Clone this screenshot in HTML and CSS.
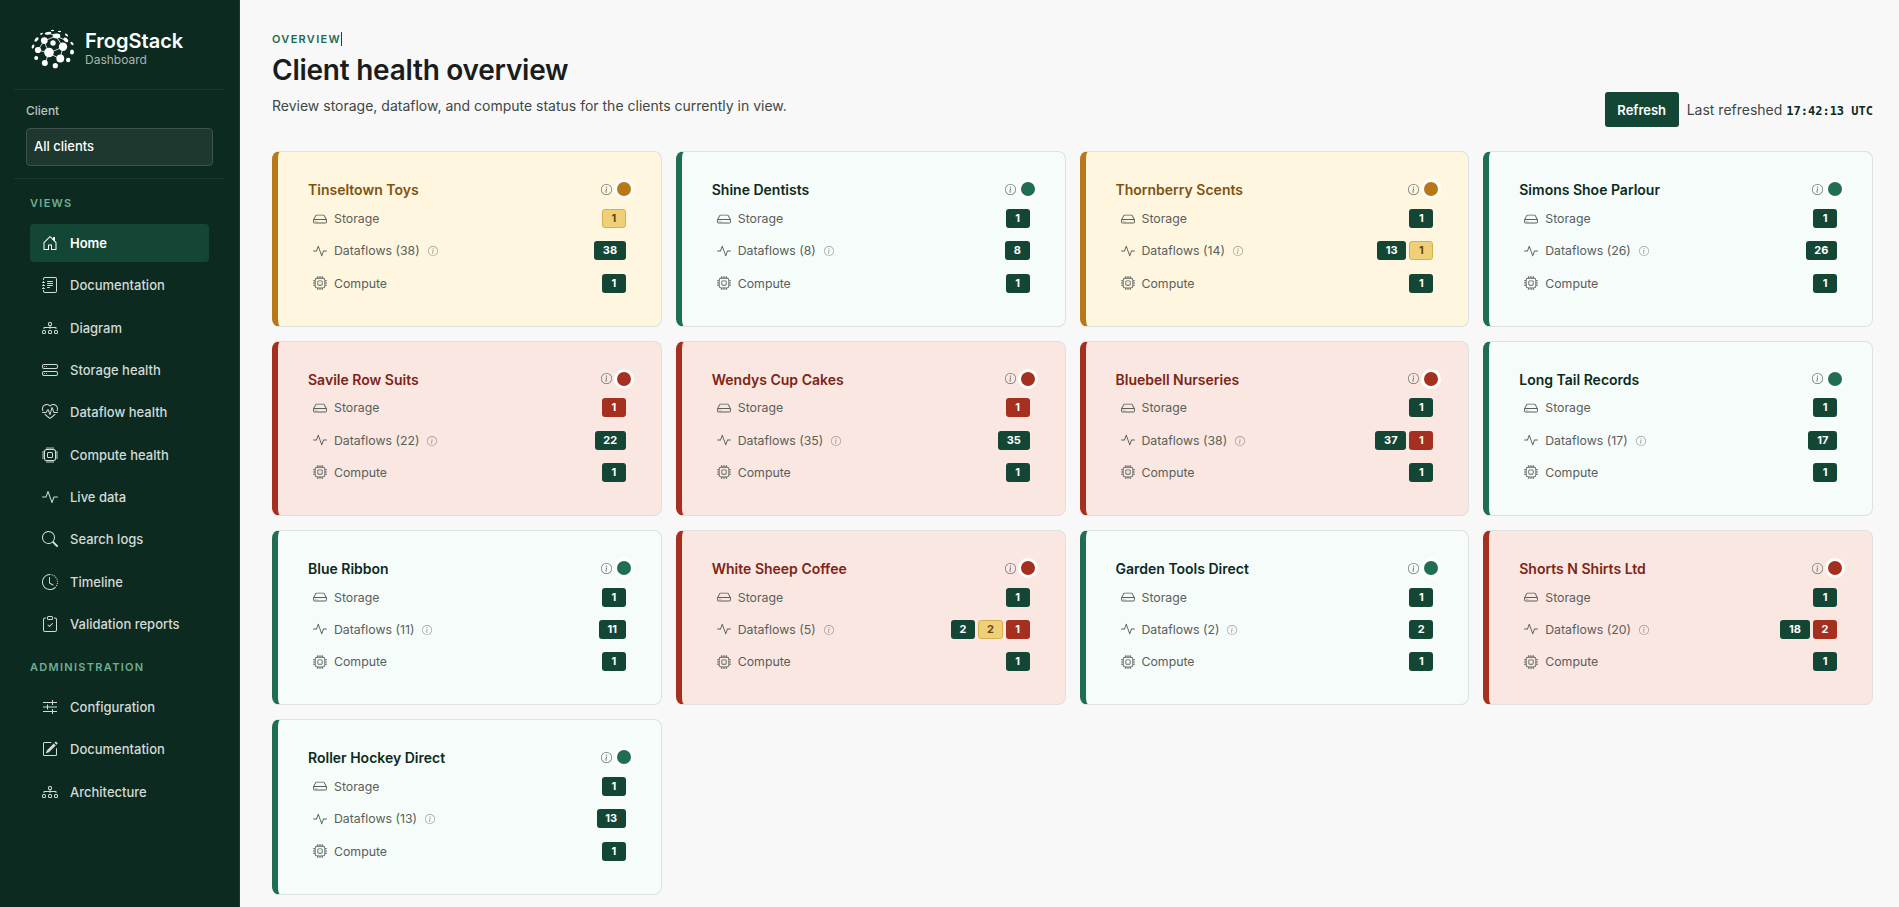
FILE: index.html
```
<!DOCTYPE html>
<html lang="en">
<head>
    <meta charset="UTF-8">
    <title>FrogStack Dashboard</title>
    <link rel="stylesheet" href="styles.css">
</head>
<body>
    <!-- Icon sprite -->
    <svg class="sprite" xmlns="http://www.w3.org/2000/svg">
        <symbol id="house" viewBox="0 0 16 16"><path d="M8.354 1.146a.5.5 0 0 0-.708 0l-6 6A.5.5 0 0 0 1.500 7.500v7a.5.5 0 0 0 .5.5h4.500a.5.5 0 0 0 .5-.5v-4h2v4a.5.5 0 0 0 .5.5H14a.5.5 0 0 0 .5-.5v-7a.5.5 0 0 0-.146-.354L13 5.793V2.500a.5.5 0 0 0-.5-.5h-1a.5.5 0 0 0-.5.5v1.293zM2.500 14V7.707l5.500-5.500 5.500 5.500V14H10v-4a.5.5 0 0 0-.5-.5h-3a.5.5 0 0 0-.5.5v4z"/></symbol>
        <symbol id="journal" viewBox="0 0 16 16"><path d="M5 10.500a.5.5 0 0 1 .5-.5h2a.5.5 0 0 1 0 1h-2a.5.5 0 0 1-.5-.5m0-2a.5.5 0 0 1 .5-.5h5a.5.5 0 0 1 0 1h-5a.5.5 0 0 1-.5-.5m0-2a.5.5 0 0 1 .5-.5h5a.5.5 0 0 1 0 1h-5a.5.5 0 0 1-.5-.5m0-2a.5.5 0 0 1 .5-.5h5a.5.5 0 0 1 0 1h-5a.5.5 0 0 1-.5-.5"/><path d="M3 0h10a2 2 0 0 1 2 2v12a2 2 0 0 1-2 2H3a2 2 0 0 1-2-2v-1h1v1a1 1 0 0 0 1 1h10a1 1 0 0 0 1-1V2a1 1 0 0 0-1-1H3a1 1 0 0 0-1 1v1H1V2a2 2 0 0 1 2-2"/><path d="M1 5v-.5a.5.5 0 0 1 1 0V5h.5a.5.5 0 0 1 0 1h-2a.5.5 0 0 1 0-1zm0 3v-.5a.5.5 0 0 1 1 0V8h.5a.5.5 0 0 1 0 1h-2a.5.5 0 0 1 0-1zm0 3v-.5a.5.5 0 0 1 1 0v.5h.5a.5.5 0 0 1 0 1h-2a.5.5 0 0 1 0-1z"/></symbol>
        <symbol id="diagram" viewBox="0 0 16 16"><path fill-rule="evenodd" d="M6 3.500A1.500 1.500 0 0 1 7.500 2h1A1.500 1.500 0 0 1 10 3.500v1A1.500 1.500 0 0 1 8.500 6v1H14a.5.5 0 0 1 .5.5v1a.5.5 0 0 1-1 0V8h-5v.5a.5.5 0 0 1-1 0V8h-5v.5a.5.5 0 0 1-1 0v-1A.5.5 0 0 1 2 7h5.500V6A1.500 1.500 0 0 1 6 4.500zM8.500 5a.5.5 0 0 0 .5-.5v-1a.5.5 0 0 0-.5-.5h-1a.5.5 0 0 0-.5.5v1a.5.5 0 0 0 .5.5zM0 11.500A1.500 1.500 0 0 1 1.500 10h1A1.500 1.500 0 0 1 4 11.500v1A1.500 1.500 0 0 1 2.500 14h-1A1.500 1.500 0 0 1 0 12.500zm1.500-.5a.5.5 0 0 0-.5.5v1a.5.5 0 0 0 .5.5h1a.5.5 0 0 0 .5-.5v-1a.5.5 0 0 0-.5-.5zm4.500.5A1.500 1.500 0 0 1 7.500 10h1a1.500 1.500 0 0 1 1.500 1.500v1A1.500 1.500 0 0 1 8.500 14h-1A1.500 1.500 0 0 1 6 12.500zm1.500-.5a.5.5 0 0 0-.5.5v1a.5.5 0 0 0 .5.5h1a.5.5 0 0 0 .5-.5v-1a.5.5 0 0 0-.5-.5zm4.500.5a1.500 1.500 0 0 1 1.500-1.500h1a1.500 1.500 0 0 1 1.500 1.500v1a1.500 1.500 0 0 1-1.500 1.500h-1a1.500 1.500 0 0 1-1.500-1.500zm1.500-.5a.5.5 0 0 0-.5.5v1a.5.5 0 0 0 .5.5h1a.5.5 0 0 0 .5-.5v-1a.5.5 0 0 0-.5-.5z"/></symbol>
        <symbol id="stack" viewBox="0 0 16 16"><path d="M14 10a1 1 0 0 1 1 1v1a1 1 0 0 1-1 1H2a1 1 0 0 1-1-1v-1a1 1 0 0 1 1-1zM2 9a2 2 0 0 0-2 2v1a2 2 0 0 0 2 2h12a2 2 0 0 0 2-2v-1a2 2 0 0 0-2-2z"/><path d="M5 11.500a.5.5 0 1 1-1 0 .5.5 0 0 1 1 0m-2 0a.5.5 0 1 1-1 0 .5.5 0 0 1 1 0M14 3a1 1 0 0 1 1 1v1a1 1 0 0 1-1 1H2a1 1 0 0 1-1-1V4a1 1 0 0 1 1-1zM2 2a2 2 0 0 0-2 2v1a2 2 0 0 0 2 2h12a2 2 0 0 0 2-2V4a2 2 0 0 0-2-2z"/><path d="M5 4.500a.5.5 0 1 1-1 0 .5.5 0 0 1 1 0m-2 0a.5.5 0 1 1-1 0 .5.5 0 0 1 1 0"/></symbol>
        <symbol id="heart" viewBox="0 0 16 16"><path d="m8 2.748-.717-.737C5.600.281 2.514.878 1.400 3.053.918 3.995.780 5.323 1.508 7H.430c-2.128-5.697 4.165-8.830 7.394-5.857q.090.083.176.171a3 3 0 0 1 .176-.170c3.230-2.974 9.522.159 7.394 5.856h-1.078c.728-1.677.590-3.005.108-3.947C13.486.878 10.400.280 8.717 2.010zM2.212 10h1.315C4.593 11.183 6.050 12.458 8 13.795c1.949-1.337 3.407-2.612 4.473-3.795h1.315c-1.265 1.566-3.140 3.250-5.788 5-2.648-1.750-4.523-3.434-5.788-5"/><path d="M10.464 3.314a.5.5 0 0 0-.945.049L7.921 8.956 6.464 5.314a.5.5 0 0 0-.88-.091L3.732 8H.5a.5.5 0 0 0 0 1H4a.5.5 0 0 0 .416-.223l1.473-2.209 1.647 4.118a.5.5 0 0 0 .945-.049l1.598-5.593 1.457 3.642A.5.5 0 0 0 12 9h3.500a.5.5 0 0 0 0-1h-3.162z"/></symbol>
        <symbol id="cpu" viewBox="0 0 16 16"><path d="M5 0a.5.5 0 0 1 .5.5V2h1V.5a.5.5 0 0 1 1 0V2h1V.5a.5.5 0 0 1 1 0V2h1V.5a.5.5 0 0 1 1 0V2A2.500 2.500 0 0 1 14 4.500h1.500a.5.5 0 0 1 0 1H14v1h1.500a.5.5 0 0 1 0 1H14v1h1.500a.5.5 0 0 1 0 1H14v1h1.500a.5.5 0 0 1 0 1H14a2.500 2.500 0 0 1-2.500 2.500v1.500a.5.5 0 0 1-1 0V14h-1v1.500a.5.5 0 0 1-1 0V14h-1v1.500a.5.5 0 0 1-1 0V14h-1v1.500a.5.5 0 0 1-1 0V14A2.500 2.500 0 0 1 2 11.500H.5a.5.5 0 0 1 0-1H2v-1H.5a.5.5 0 0 1 0-1H2v-1H.5a.5.5 0 0 1 0-1H2v-1H.5a.5.5 0 0 1 0-1H2A2.500 2.500 0 0 1 4.500 2V.5A.5.5 0 0 1 5 0m-.5 3A1.500 1.500 0 0 0 3 4.500v7A1.500 1.500 0 0 0 4.500 13h7a1.500 1.500 0 0 0 1.500-1.500v-7A1.500 1.500 0 0 0 11.500 3zM5 6.500A1.500 1.500 0 0 1 6.500 5h3A1.500 1.500 0 0 1 11 6.500v3A1.500 1.500 0 0 1 9.500 11h-3A1.500 1.500 0 0 1 5 9.500zM6.500 6a.5.5 0 0 0-.5.5v3a.5.5 0 0 0 .5.5h3a.5.5 0 0 0 .5-.5v-3a.5.5 0 0 0-.5-.5z"/></symbol>
        <symbol id="activity" viewBox="0 0 16 16"><path fill-rule="evenodd" d="M6 2a.5.5 0 0 1 .470.330L10 12.036l1.530-4.208A.5.5 0 0 1 12 7.500h3.500a.5.5 0 0 1 0 1h-3.150l-1.880 5.170a.5.5 0 0 1-.940 0L6 3.964 4.470 8.171A.5.5 0 0 1 4 8.500H.5a.5.5 0 0 1 0-1h3.150l1.880-5.170A.5.5 0 0 1 6 2"/></symbol>
        <symbol id="search" viewBox="0 0 16 16"><path d="M11.742 10.344a6.500 6.500 0 1 0-1.397 1.398h-.001q.045.060.098.115l3.850 3.850a1 1 0 0 0 1.415-1.414l-3.850-3.850a1 1 0 0 0-.115-.100zM12 6.500a5.500 5.500 0 1 1-11 0 5.500 5.500 0 0 1 11 0"/></symbol>
        <symbol id="history" viewBox="0 0 16 16"><path d="M8.515 1.019A7 7 0 0 0 8 1V0a8 8 0 0 1 .589.022zm2.004.450a7 7 0 0 0-.985-.299l.219-.976q.576.129 1.126.342zm1.370.710a7 7 0 0 0-.439-.270l.493-.870a8 8 0 0 1 .979.654l-.615.789a7 7 0 0 0-.418-.302zm1.834 1.790a7 7 0 0 0-.653-.796l.724-.690q.406.429.747.910zm.744 1.352a7 7 0 0 0-.214-.468l.893-.450a8 8 0 0 1 .450 1.088l-.950.313a7 7 0 0 0-.179-.483m.530 2.507a7 7 0 0 0-.100-1.025l.985-.170q.100.580.116 1.170zm-.131 1.538q.050-.254.081-.510l.993.123a8 8 0 0 1-.230 1.155l-.964-.267q.069-.247.120-.501m-.952 2.379q.276-.436.486-.908l.914.405q-.240.540-.555 1.038zm-.964 1.205q.183-.183.350-.378l.758.653a8 8 0 0 1-.401.432z"/><path d="M8 1a7 7 0 1 0 4.950 11.950l.707.707A8.001 8.001 0 1 1 8 0z"/><path d="M7.500 3a.5.5 0 0 1 .5.5v5.210l3.248 1.856a.5.5 0 0 1-.496.868l-3.500-2A.5.5 0 0 1 7 9V3.500a.5.5 0 0 1 .5-.5"/></symbol>
        <symbol id="clipboard" viewBox="0 0 16 16"><path fill-rule="evenodd" d="M10.854 7.146a.5.5 0 0 1 0 .708l-3 3a.5.5 0 0 1-.708 0l-1.500-1.500a.5.5 0 1 1 .708-.708L7.500 9.793l2.646-2.647a.5.5 0 0 1 .708 0"/><path d="M4 1.500H3a2 2 0 0 0-2 2V14a2 2 0 0 0 2 2h10a2 2 0 0 0 2-2V3.500a2 2 0 0 0-2-2h-1v1h1a1 1 0 0 1 1 1V14a1 1 0 0 1-1 1H3a1 1 0 0 1-1-1V3.500a1 1 0 0 1 1-1h1z"/><path d="M9.500 1a.5.5 0 0 1 .5.5v1a.5.5 0 0 1-.5.5h-3a.5.5 0 0 1-.5-.5v-1a.5.5 0 0 1 .5-.5zm-3-1A1.500 1.500 0 0 0 5 1.500v1A1.500 1.500 0 0 0 6.500 4h3A1.500 1.500 0 0 0 11 2.500v-1A1.500 1.500 0 0 0 9.500 0z"/></symbol>
        <symbol id="sliders" viewBox="0 0 16 16"><path d="M1 3.500h14M1 8h14M1 12.500h14M10.500 1v5M5.500 5.500v5M10.500 10v5" fill="none" stroke="currentColor"/></symbol>
        <symbol id="pencil" viewBox="0 0 16 16"><path d="M15.502 1.940a.5.5 0 0 1 0 .706L14.459 3.690l-2-2L13.502.646a.5.5 0 0 1 .707 0l1.293 1.293zm-1.750 2.456-2-2L4.939 9.210a.5.5 0 0 0-.121.196l-.805 2.414a.250.250 0 0 0 .316.316l2.414-.805a.5.5 0 0 0 .196-.120z"/><path fill-rule="evenodd" d="M1 13.500A1.500 1.500 0 0 0 2.500 15h11a1.500 1.500 0 0 0 1.500-1.500v-6a.5.5 0 0 0-1 0v6a.5.5 0 0 1-.5.5h-11a.5.5 0 0 1-.5-.5v-11a.5.5 0 0 1 .5-.5H9a.5.5 0 0 0 0-1H2.500A1.500 1.500 0 0 0 1 2.500z"/></symbol>
        <symbol id="hdd" viewBox="0 0 16 16"><path d="M4.500 11a.5.5 0 1 0 0-1 .5.5 0 0 0 0 1M3 10.500a.5.5 0 1 1-1 0 .5.5 0 0 1 1 0"/><path d="M16 11a2 2 0 0 1-2 2H2a2 2 0 0 1-2-2V9.510c0-.418.105-.830.305-1.197l2.472-4.531A1.500 1.500 0 0 1 4.094 3h7.812a1.500 1.500 0 0 1 1.317.782l2.472 4.530c.200.368.305.780.305 1.198zM3.655 4.260 1.592 8.043Q1.790 8 2 8h12q.210 0 .408.042L12.345 4.260a.5.5 0 0 0-.439-.260H4.094a.5.5 0 0 0-.440.260zM1 10v1a1 1 0 0 0 1 1h12a1 1 0 0 0 1-1v-1a1 1 0 0 0-1-1H2a1 1 0 0 0-1 1"/></symbol>
        <symbol id="info" viewBox="0 0 16 16"><path d="M8 15A7 7 0 1 1 8 1a7 7 0 0 1 0 14m0 1A8 8 0 1 0 8 0a8 8 0 0 0 0 16"/><path d="m8.930 6.588-2.290.287-.082.380.450.083c.294.070.352.176.288.469l-.738 3.468c-.194.897.105 1.319.808 1.319.545 0 1.178-.252 1.465-.598l.088-.416c-.200.176-.492.246-.686.246-.275 0-.375-.193-.304-.533zM9 4.500a1 1 0 1 1-2 0 1 1 0 0 1 2 0"/></symbol>
    </svg>

    <aside class="sidebar">
        <div class="brand">
            <svg class="brand-logo" viewBox="0 0 44 42">
                <path d="M18 25 13 13 25 8 32 19ZM7 22l11 3 11 6 3-12M18 25l-4 10M13 13 7 22M25 8 17 5M25 8l9 4"/>
                <circle cx="18" cy="24.500" r="4.800"/>
                <circle cx="32" cy="18.800" r="4.200"/>
                <circle cx="29.300" cy="30.500" r="3.900"/>
                <circle cx="13.300" cy="12.600" r="3.400"/>
                <circle cx="7" cy="22" r="3.100"/>
                <circle cx="22" cy="15" r="2.700"/>
                <circle cx="13.800" cy="35" r="3"/>
                <circle cx="24.300" cy="37.700" r="2.600"/>
                <circle cx="5.200" cy="30" r="2"/>
                <circle cx="37.200" cy="32" r="2.200"/>
                <ellipse cx="41" cy="24" rx="2" ry="2.600"/>
                <ellipse cx="25.500" cy="8" rx="3.800" ry="2.400"/>
                <ellipse cx="17" cy="5.300" rx="3.300" ry="1.400" transform="rotate(-10 17 5)"/>
                <ellipse cx="34.800" cy="12" rx="2.800" ry="1.800" transform="rotate(40 35 12)"/>
                <ellipse cx="5.500" cy="11.500" rx="2.600" ry="1.400" transform="rotate(-45 5.500 11.500)"/>
                <ellipse cx="2" cy="18.500" rx="1.200" ry="2.100" transform="rotate(20 2 18.500)"/>
                <ellipse cx="41" cy="15.500" rx="2.100" ry="1.100" transform="rotate(50 41 15.500)"/>
                <ellipse cx="10.500" cy="5.800" rx="1.500" ry=".9" transform="rotate(-30 10.500 5.800)"/>
                <ellipse cx="35.500" cy="7" rx="1.900" ry=".9" transform="rotate(40 35.500 7)"/>
                <ellipse cx="21.500" cy="2.500" rx="1.600" ry=".8"/>
                <ellipse cx="28.500" cy="3.500" rx="1.700" ry=".8"/>
            </svg>
            <div>
                <div class="brand-name">FrogStack</div>
                <div class="brand-sub">Dashboard</div>
            </div>
        </div>

        <div class="client-picker">
            <label class="client-label">Client</label>
            <div class="client-select">All clients</div>
        </div>

        <h2 class="nav-heading">Views</h2>
        <nav class="nav">
            <a class="nav-item active"><svg class="icon"><use href="#house"/></svg>Home</a>
            <a class="nav-item"><svg class="icon"><use href="#journal"/></svg>Documentation</a>
            <a class="nav-item"><svg class="icon"><use href="#diagram"/></svg>Diagram</a>
            <a class="nav-item"><svg class="icon"><use href="#stack"/></svg>Storage health</a>
            <a class="nav-item"><svg class="icon"><use href="#heart"/></svg>Dataflow health</a>
            <a class="nav-item"><svg class="icon"><use href="#cpu"/></svg>Compute health</a>
            <a class="nav-item"><svg class="icon"><use href="#activity"/></svg>Live data</a>
            <a class="nav-item"><svg class="icon"><use href="#search"/></svg>Search logs</a>
            <a class="nav-item"><svg class="icon"><use href="#history"/></svg>Timeline</a>
            <a class="nav-item"><svg class="icon"><use href="#clipboard"/></svg>Validation reports</a>
        </nav>

        <h2 class="nav-heading">Administration</h2>
        <nav class="nav">
            <a class="nav-item"><svg class="icon"><use href="#sliders"/></svg>Configuration</a>
            <a class="nav-item"><svg class="icon"><use href="#pencil"/></svg>Documentation</a>
            <a class="nav-item"><svg class="icon"><use href="#diagram"/></svg>Architecture</a>
        </nav>
    </aside>

    <main class="main">
        <header class="page-header">
            <div>
                <div class="eyebrow">Overview<span class="caret"></span></div>
                <h1>Client health overview</h1>
                <p>Review storage, dataflow, and compute status for the clients currently in view.</p>
            </div>
            <div class="refresh">
                <button class="btn">Refresh</button>
                <span>Last refreshed <strong class="refresh-time">17:42:13 UTC</strong></span>
            </div>
        </header>

        <section class="client-grid" id="clients"></section>
    </main>

    <script src="script.js"></script>
</body>
</html>
```
FILE: styles.css
```
* {
    box-sizing: border-box;
}
body {
    margin: 0;
    display: flex;
    height: 907px;
    overflow: hidden;
    font-family: Inter, sans-serif;
    font-size: 14px;
    color: #404743;
    background: #f8f8f8;
}
.sprite {
    display: none;
}
.icon {
    width: 16px;
    height: 16px;
    flex: none;
    fill: currentColor;
}

/* Sidebar */
.sidebar {
    width: 240px;
    flex: none;
    padding: 0 14px;
    background: #0c2a20;
    border-right: 1px solid #1d392f;
}
.brand {
    display: flex;
    align-items: center;
    gap: 10px;
    height: 90px;
    padding: 8px 17px 0;
    border-bottom: 1px solid #1d392f;
}
.brand-logo {
    width: 44px;
    height: 42px;
    fill: #fff;
    flex: none;
}
.brand-logo path {
    fill: none;
    stroke: #fff;
    stroke-width: .8;
}
.brand-name {
    color: #fff;
    font-size: 20px;
    font-weight: 600;
    line-height: 22px;
}
.brand-sub {
    color: #a9b5b0;
    font-size: 12px;
    line-height: 16px;
}
.client-picker {
    height: 89px;
    padding: 13px 12px 0;
    border-bottom: 1px solid #1d392f;
}
.client-label {
    display: block;
    color: #bac4bf;
    font-size: 12px;
    font-weight: 500;
    line-height: 16px;
}
.client-select {
    height: 38px;
    margin-top: 9px;
    padding: 0 7px;
    color: #fff;
    font-size: 13px;
    font-weight: 500;
    line-height: 35px;
    background: #1e382f;
    border: 1px solid #3d544c;
    border-radius: 4px;
}
.nav-heading {
    margin: 16px 16px 0;
    color: #6fae93;
    font-size: 11px;
    font-weight: 600;
    line-height: 16px;
    letter-spacing: 1.3px;
    text-transform: uppercase;
}
.nav {
    display: flex;
    flex-direction: column;
    gap: 4.35px;
    padding: 13px 16px 0;
}
.nav-item {
    display: flex;
    align-items: center;
    gap: 12px;
    height: 38px;
    padding: 0 12px;
    color: #d3dad7;
    font-size: 13px;
    font-weight: 500;
    white-space: nowrap;
    border-radius: 4px;
}
.nav-item.active {
    color: #fff;
    font-weight: 600;
    background: #144636;
}

/* Page header */
.main {
    flex: 1;
    padding: 31px 26px 0 32px;
}
.page-header {
    display: flex;
    justify-content: space-between;
    align-items: flex-end;
    height: 96px;
    margin-bottom: 24.45px;
}
.page-header > div:first-child {
    align-self: flex-start;
}
.eyebrow {
    display: flex;
    align-items: center;
    color: #1e6b50;
    font-size: 11px;
    font-weight: 600;
    line-height: 16px;
    letter-spacing: 1.3px;
    text-transform: uppercase;
}
.caret {
    width: 1px;
    height: 14px;
    background: #144636;
}
.page-header h1 {
    margin: 4px 0 7px;
    color: #1a1d1b;
    font-size: 28px;
    font-weight: 600;
    line-height: 38px;
    letter-spacing: -.25px;
}
.page-header p {
    margin: 0;
    font-size: 14px;
    line-height: 20px;
}
.refresh {
    display: flex;
    align-items: center;
    gap: 8px;
}
.btn {
    width: 74px;
    height: 35px;
    padding: 0;
    color: #fff;
    font: 600 13px Inter, sans-serif;
    background: #144636;
    border: 0;
    border-radius: 3px;
}
.refresh-time {
    color: #0c2a20;
    font: 700 12px "DejaVu Sans Mono", monospace;
}

/* Client cards */
.client-grid {
    display: grid;
    grid-template-columns: repeat(4, 1fr);
    gap: 14px;
}
.card {
    height: 175.3px;
    padding: 26px 30px 0;
    border: 1px solid #dde1df;
    border-left: 6px solid #1f6e52;
    border-radius: 8px;
    background: #f5fcfa;
}
.card-head {
    display: flex;
    justify-content: space-between;
    align-items: center;
    height: 22px;
    margin-bottom: 2px;
}
.card-head h3 {
    margin: 1px 0 0;
    color: #0c2a20;
    font-size: 14px;
    font-weight: 600;
}
.card-status {
    display: flex;
    align-items: center;
    gap: 5px;
}
.card-status .icon {
    width: 11px;
    height: 11px;
    color: #6d736f;
}
.dot {
    width: 14px;
    height: 14px;
    border-radius: 50%;
    background: #1f6e52;
    box-shadow: 0 0 0 3px #fff;
}
.metric {
    display: flex;
    align-items: center;
    height: 32.3px;
    padding: 0 5px;
    color: #59605c;
    font-size: 12.3px;
}
.metric .icon {
    width: 14px;
    height: 14px;
    margin-right: 7px;
}
.metric .hint {
    width: 10px;
    height: 10px;
    margin: 1px 0 0 8px;
    opacity: .6;
}
.badges {
    display: flex;
    gap: 3px;
    margin-left: auto;
}
.badge {
    min-width: 24px;
    height: 19px;
    padding: 0 8.7px;
    color: #fff;
    font-size: 11px;
    font-weight: 700;
    line-height: 19px;
    text-align: center;
    background: #144636;
    border-radius: 3px;
}
.badge.warn {
    padding: 0 7.7px;
    color: #654610;
    line-height: 17px;
    background: #efcf78;
    border: 1px solid #d5b04e;
}
.badge.bad {
    background: #a6301f;
}
.card.warn {
    background: #fff6e0;
    border-left-color: #b97818;
}
.card.warn h3 {
    color: #7e5310;
}
.card.warn .dot {
    background: #b97818;
}
.card.bad {
    background: #fae7e1;
    border-left-color: #a6301f;
}
.card.bad h3 {
    color: #7d2417;
}
.card.bad .dot {
    background: #a6301f;
}
```
FILE: script.js
```
// counts are [ok, warn, bad]
const clients = [
    { name: 'Tinseltown Toys', status: 'warn', storage: [0, 1, 0], dataflows: [38, 0, 0] },
    { name: 'Shine Dentists', status: 'ok', storage: [1, 0, 0], dataflows: [8, 0, 0] },
    { name: 'Thornberry Scents', status: 'warn', storage: [1, 0, 0], dataflows: [13, 1, 0] },
    { name: 'Simons Shoe Parlour', status: 'ok', storage: [1, 0, 0], dataflows: [26, 0, 0] },
    { name: 'Savile Row Suits', status: 'bad', storage: [0, 0, 1], dataflows: [22, 0, 0] },
    { name: 'Wendys Cup Cakes', status: 'bad', storage: [0, 0, 1], dataflows: [35, 0, 0] },
    { name: 'Bluebell Nurseries', status: 'bad', storage: [1, 0, 0], dataflows: [37, 0, 1] },
    { name: 'Long Tail Records', status: 'ok', storage: [1, 0, 0], dataflows: [17, 0, 0] },
    { name: 'Blue Ribbon', status: 'ok', storage: [1, 0, 0], dataflows: [11, 0, 0] },
    { name: 'White Sheep Coffee', status: 'bad', storage: [1, 0, 0], dataflows: [2, 2, 1] },
    { name: 'Garden Tools Direct', status: 'ok', storage: [1, 0, 0], dataflows: [2, 0, 0] },
    { name: 'Shorts N Shirts Ltd', status: 'bad', storage: [1, 0, 0], dataflows: [18, 0, 2] },
    { name: 'Roller Hockey Direct', status: 'ok', storage: [1, 0, 0], dataflows: [13, 0, 0] }
];

const levels = ['ok', 'warn', 'bad'];

function icon(name, extra = '') {
    return `<svg class="icon ${extra}"><use href="#${name}"/></svg>`;
}

function metric(iconName, label, counts, hint = '') {
    const badges = counts
        .map((n, i) => n ? `<span class="badge ${levels[i]}">${n}</span>` : '')
        .join('');
    return `<div class="metric">${icon(iconName)}${label}${hint}<div class="badges">${badges}</div></div>`;
}

document.getElementById('clients').innerHTML = clients.map(c => {
    const total = c.dataflows.reduce((a, b) => a + b, 0);
    return `
        <article class="card ${c.status}">
            <div class="card-head">
                <h3>${c.name}</h3>
                <div class="card-status">${icon('info')}<span class="dot"></span></div>
            </div>
            ${metric('hdd', 'Storage', c.storage)}
            ${metric('activity', `Dataflows (${total})`, c.dataflows, icon('info', 'hint'))}
            ${metric('cpu', 'Compute', [1, 0, 0])}
        </article>`;
}).join('');
```
